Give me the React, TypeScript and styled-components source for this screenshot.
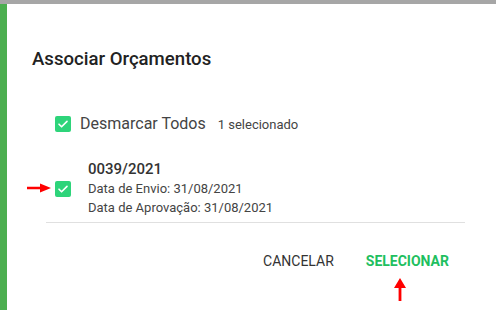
import React from 'react';
import styled, { createGlobalStyle } from 'styled-components';

const GlobalStyle = createGlobalStyle`
    html, body {
        margin: 0;
        padding: 0;
        background: #ffffff;
        font-family: Roboto, "Liberation Sans", Arial, sans-serif;
    }
`
const Page = styled.div`
    display: flex;
    flex-flow: column;
    width: 496px;
    height: 310px;
    overflow: hidden;
    position: relative;
`
const TopBar = styled.div`
    height: 4px;
    background-color: #a6a6a6;
    flex-shrink: 0;
`
const Body = styled.div`
    display: flex;
    flex-flow: row;
    flex: 1;
`
const SideBar = styled.div`
    width: 7px;
    background-color: #4caf50;
    flex-shrink: 0;
`
const Dialog = styled.div`
    flex: 1;
    display: flex;
    flex-flow: column;
    padding: 43px 31px 0 25px;
    position: relative;
`
const Title = styled.h2`
    margin: 0;
    font-size: 18.6px;
    font-weight: 500;
    line-height: 24px;
    color: #222;
`
const List = styled.div`
    display: flex;
    flex-flow: column;
    padding-left: 23px;
    margin-top: 43px;
`
const Row = styled.div<{ $gap: number; $align?: string }>`
    display: flex;
    flex-flow: row;
    align-items: ${(p) => p.$align || 'center'};
    gap: ${(p) => p.$gap}px;
`
const Box = styled.span`
    width: 16px;
    height: 16px;
    border-radius: 2px;
    background-color: #2ed47a;
    display: flex;
    align-items: center;
    justify-content: center;
    flex-shrink: 0;
`
const Label = styled.span`
    font-size: 16px;
    color: #444;
    line-height: 20px;
`
const Count = styled.span`
    font-size: 13px;
    color: #444;
    margin-left: 3px;
`
const Item = styled(Row)`
    margin-top: 26px;
`
const ItemText = styled.div`
    display: flex;
    flex-flow: column;
`
const ItemTitle = styled.span`
    font-size: 15px;
    font-weight: 500;
    color: #333;
    line-height: 19px;
`
const ItemLine = styled.span`
    font-size: 13px;
    color: #444;
    line-height: 19px;
`
const Divider = styled.hr`
    border: none;
    border-top: 1px solid #e0e0e0;
    margin: 5px 0 0 14px;
`
const Actions = styled.div`
    display: flex;
    flex-flow: row;
    justify-content: flex-end;
    margin-top: 22px;
`
const ActionButton = styled.button<{ $primary?: boolean }>`
    border: none;
    background: none;
    padding: 6px 16px;
    font-family: Roboto, "Liberation Sans", Arial, sans-serif;
    font-size: 14px;
    line-height: 20px;
    font-weight: ${(p) => (p.$primary ? 700 : 400)};
    color: ${(p) => (p.$primary ? '#1fbf5f' : '#333')};
    text-transform: uppercase;
    cursor: pointer;
`
const Pointer = styled.svg<{ $left: number; $top: number }>`
    position: absolute;
    left: ${(p) => p.$left}px;
    top: ${(p) => p.$top}px;
`

const Check = () => (
    <svg width={12} height={12} viewBox="0 0 12 12">
        <path d="M2 6.2l2.6 2.6L10 3.4" fill="none" stroke="#fff" strokeWidth={1.6} strokeLinecap="round" strokeLinejoin="round" />
    </svg>
)

function App() {
    return <Page>
        <GlobalStyle />
        <TopBar />
        <Body>
            <SideBar />
            <Dialog>
                <Title>Associar Orçamentos</Title>
                <List>
                    <Row $gap={9}>
                        <Box><Check /></Box>
                        <Label>Desmarcar Todos</Label>
                        <Count>1 selecionado</Count>
                    </Row>
                    <Item $gap={17}>
                        <Box><Check /></Box>
                        <ItemText>
                            <ItemTitle>0039/2021</ItemTitle>
                            <ItemLine>Data de Envio: 31/08/2021</ItemLine>
                            <ItemLine>Data de Aprovação: 31/08/2021</ItemLine>
                        </ItemText>
                    </Item>
                </List>
                <Divider />
                <Actions>
                    <ActionButton>Cancelar</ActionButton>
                    <ActionButton $primary>Selecionar</ActionButton>
                </Actions>
            </Dialog>
        </Body>
        <Pointer $left={27} $top={183} width={24} height={10} viewBox="0 0 24 10">
            <path d="M0 3.8h13V0.5L24 5l-11 4.5V6.2H0z" fill="#ff0000" />
        </Pointer>
        <Pointer $left={394} $top={278} width={12} height={23} viewBox="0 0 12 23">
            <path d="M6 0l6 10H7.4v13H4.6V10H0z" fill="#ff0000" />
        </Pointer>
    </Page>
}

export default App;
